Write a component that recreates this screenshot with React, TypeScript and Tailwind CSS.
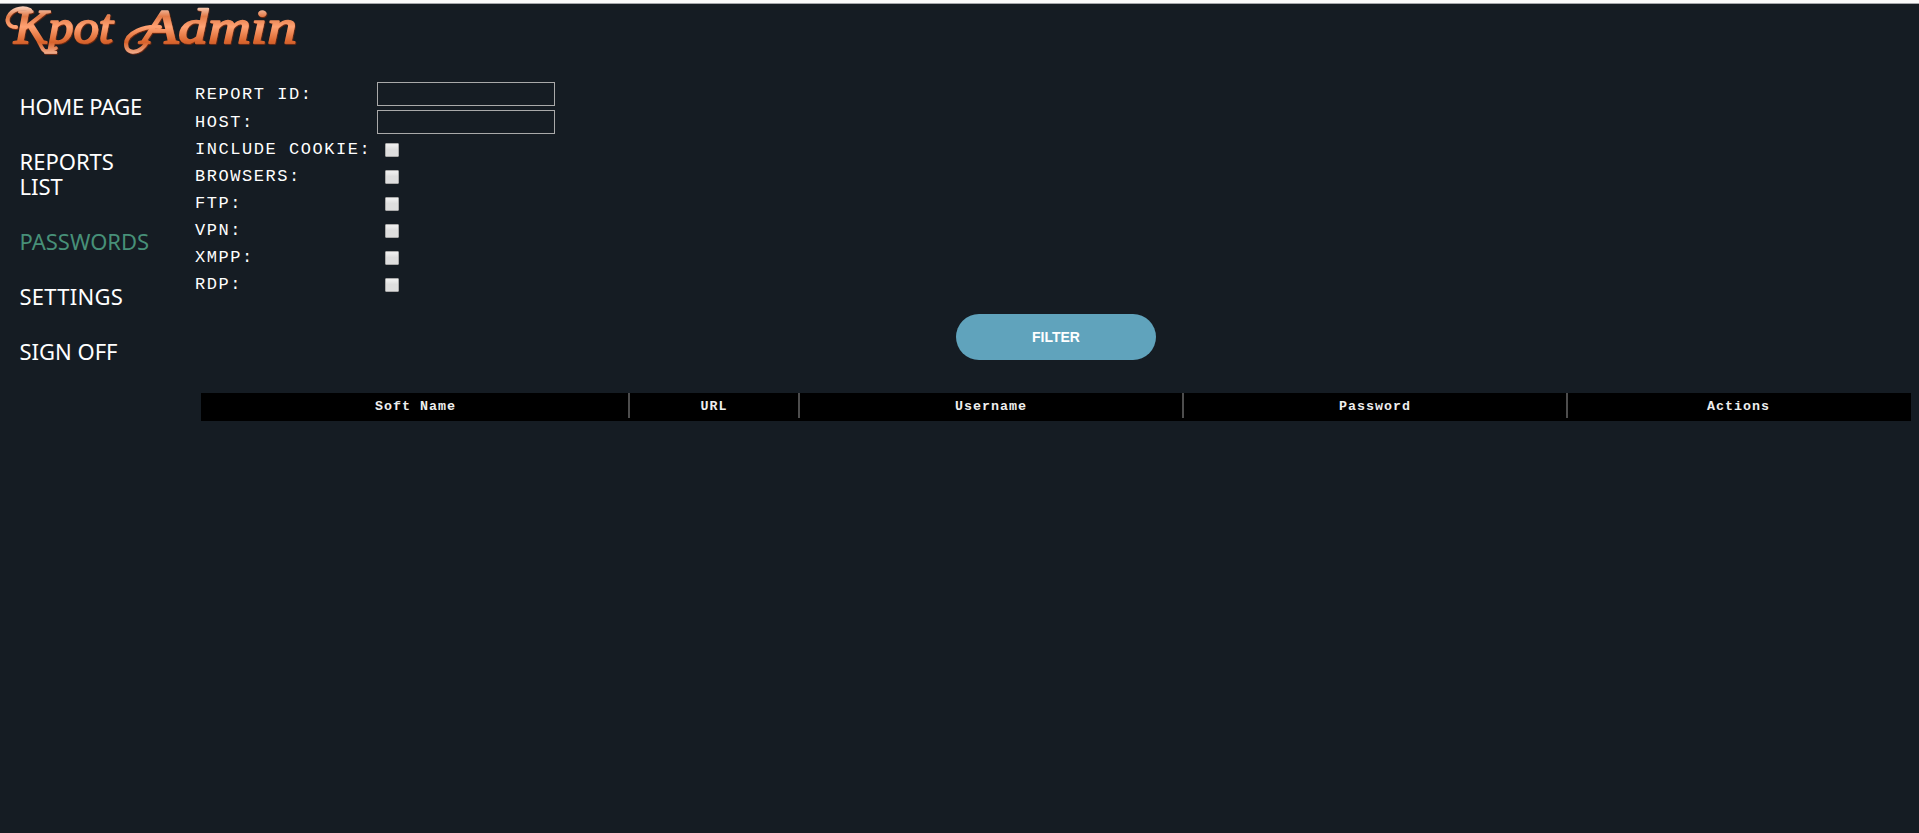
const navItems = [
  { label: 'HOME PAGE', look: 'tracking-[-0.35px]' },
  { label: 'REPORTS LIST', look: '' },
  { label: 'PASSWORDS', look: 'text-[#479078]' },
  { label: 'SETTINGS', look: 'tracking-[0.25px]' },
  { label: 'SIGN OFF', look: '' },
];

const textFields = ['REPORT ID:', 'HOST:'];
const flags = ['INCLUDE COOKIE:', 'BROWSERS:', 'FTP:', 'VPN:', 'XMPP:', 'RDP:'];
const columns = ['Soft Name', 'URL', 'Username', 'Password', 'Actions'];

function Logo() {
  return (
    <svg className="block h-[60px] w-[310px] overflow-visible" viewBox="0 0 310 60" role="img" aria-label="Kpot Admin">
      <defs>
        <linearGradient id="copper" gradientUnits="userSpaceOnUse" x1="0" y1="3" x2="0" y2="50">
          <stop offset="0" stopColor="#f8cdb8" />
          <stop offset="0.2" stopColor="#e27a48" />
          <stop offset="0.42" stopColor="#ffa273" />
          <stop offset="0.75" stopColor="#d8622a" />
          <stop offset="1" stopColor="#f4b090" />
        </linearGradient>
        <filter id="bevel" x="-5%" y="-10%" width="110%" height="125%">
          <feDropShadow dx="0.6" dy="1" stdDeviation="0.4" floodColor="#7a2c0c" />
        </filter>
      </defs>
      <g filter="url(#bevel)" stroke="url(#copper)" strokeLinecap="round" strokeLinejoin="round">
        <g className="font-['Liberation_Serif',serif] text-[48px] italic" fill="url(#copper)" strokeWidth="1.7">
          <text x="14" y="39" textLength="99" lengthAdjust="spacingAndGlyphs">Kpot</text>
          <text x="142" y="39" textLength="155" lengthAdjust="spacingAndGlyphs">Admin</text>
        </g>
        {/* entry and exit swashes around the capitals */}
        <g fill="none" strokeWidth="4">
          <path d="M16 23C8 23 5 16 10 10C15 4 24 3 30 6" />
          <path d="M39 38C42 44 43 47 46 47C50 47 52 46 56 44" strokeWidth="3.5" />
          <path d="M160 23C145 21 126 29 126 40C126 51 140 50 147 38" />
        </g>
      </g>
    </svg>
  );
}

export default function App() {
  return (
    <div className="flex h-screen w-full flex-col overflow-hidden bg-[#151c23] text-white">
      <div className="h-1 shrink-0 border-b border-[#a5a7ab] bg-[#fafafa]" />
      <header className="h-[70px] shrink-0">
        <Logo />
      </header>
      <div className="flex">
        <nav className="flex w-[195px] shrink-0 flex-col gap-[30px] pt-5 pl-[19.5px] font-['Noto_Sans',sans-serif] text-[22px] leading-[25px]">
          {navItems.map((item) => (
            <a key={item.label} href="#" className={`w-[130px] ${item.look}`}>
              {item.label}
            </a>
          ))}
        </nav>
        <main className="min-w-0 flex-1 pt-1.5 font-['Courier_New','Liberation_Mono',monospace]">
          <form onSubmit={(e) => e.preventDefault()}>
            {textFields.map((label) => (
              <label key={label} className="flex h-7 items-center text-[17px] leading-5 tracking-[1.55px]">
                <span className="w-[182px] pt-0.5 whitespace-nowrap">{label}</span>
                <input className="h-6 w-[178px] border border-[#a9a9a9] bg-transparent px-1 outline-none" />
              </label>
            ))}
            {flags.map((label) => (
              <label key={label} className="flex h-[27px] items-center text-[17px] leading-5 tracking-[1.55px]">
                <span className="w-[190px] whitespace-nowrap">{label}</span>
                <input
                  type="checkbox"
                  className="mt-px size-3.5 appearance-none rounded-[1px] border border-[#a9a9a9] bg-linear-to-b from-[#eeeeee] from-10% to-[#dedede] to-45% checked:bg-[#60a3bc]"
                />
              </label>
            ))}
            <button className="mt-4 ml-[761px] block h-[46px] w-[200px] rounded-full bg-[#60a3bc] font-['Liberation_Sans',sans-serif] text-[14px] font-bold">
              FILTER
            </button>
          </form>
          <table className="mt-[33px] ml-1.5 h-7 w-[1710px] table-fixed border-collapse bg-black">
            <colgroup>
              <col className="w-[429px]" />
              <col className="w-[170px]" />
              <col className="w-[384px]" />
              <col className="w-[384px]" />
              <col className="w-[343px]" />
            </colgroup>
            <thead>
              <tr>
                {columns.map((name) => (
                  <th key={name} className="group h-7 p-0 align-top text-[13.33px] leading-[27px] font-bold tracking-[1px]">
                    <div className="h-[25px] border-r-2 border-[#4d4d4d] text-[#eeeeee] group-first:pl-0.5 group-last:border-transparent">{name}</div>
                  </th>
                ))}
              </tr>
            </thead>
          </table>
        </main>
      </div>
    </div>
  );
}
